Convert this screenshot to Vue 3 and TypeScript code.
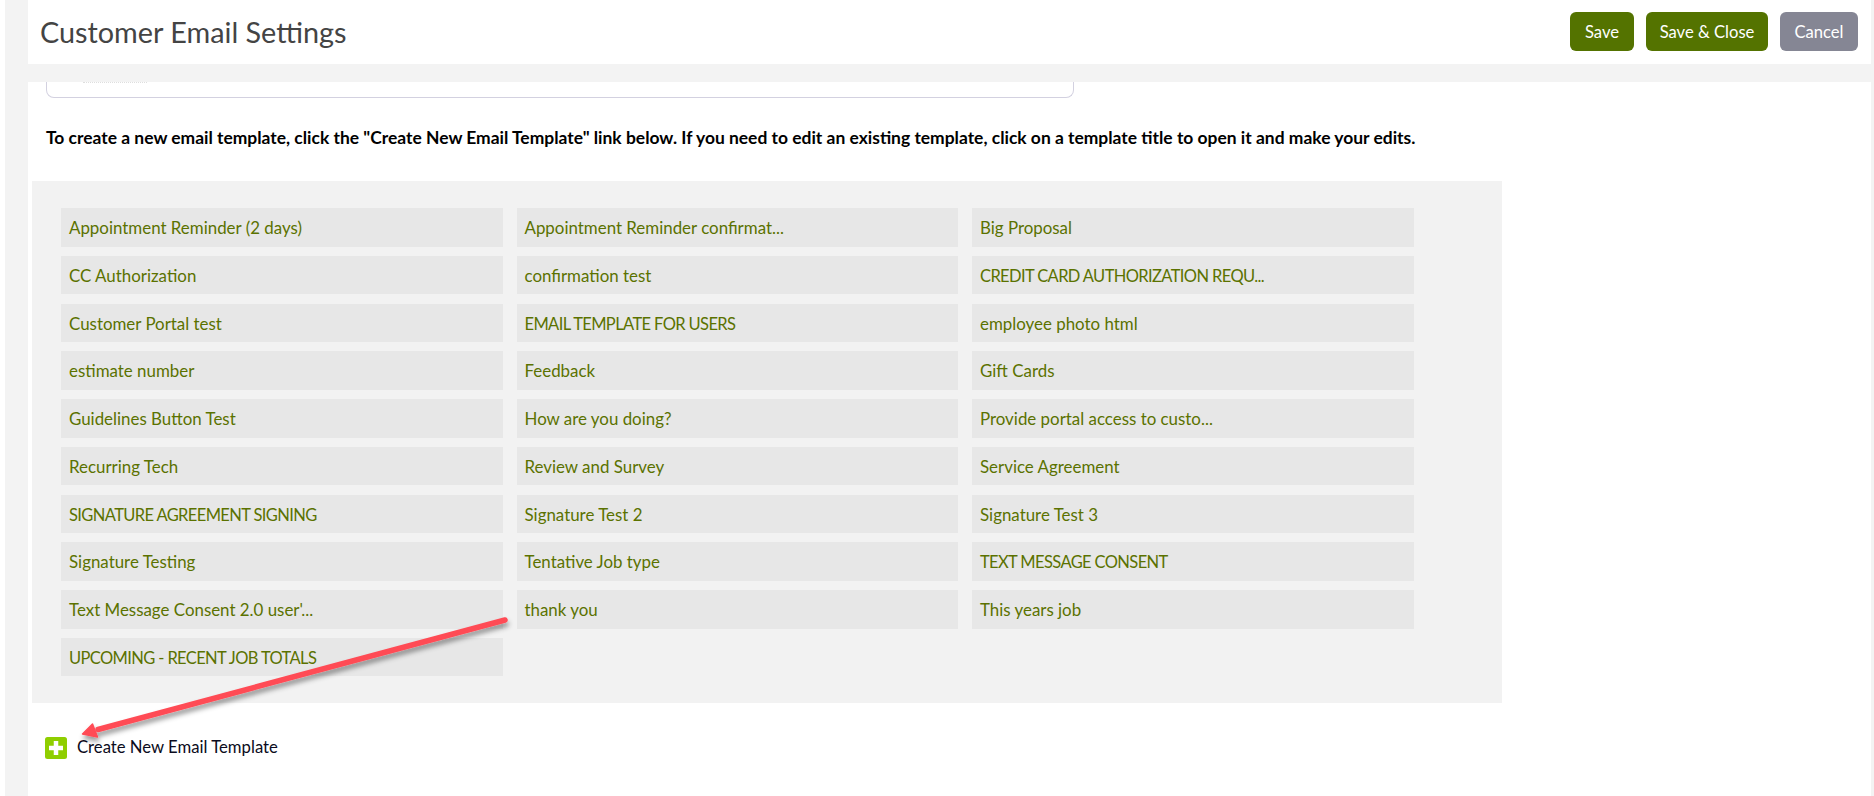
<script setup lang="ts">
const templates: string[] = [
  'Appointment Reminder (2 days)', 'Appointment Reminder confirmat...', 'Big Proposal',
  'CC Authorization', 'confirmation test', 'CREDIT CARD AUTHORIZATION REQU...',
  'Customer Portal test', 'EMAIL TEMPLATE FOR USERS', 'employee photo html',
  'estimate number', 'Feedback', 'Gift Cards',
  'Guidelines Button Test', 'How are you doing?', 'Provide portal access to custo...',
  'Recurring Tech', 'Review and Survey', 'Service Agreement',
  'SIGNATURE AGREEMENT SIGNING', 'Signature Test 2', 'Signature Test 3',
  'Signature Testing', 'Tentative Job type', 'TEXT MESSAGE CONSENT',
  "Text Message Consent 2.0 user'...", 'thank you', 'This years job',
  'UPCOMING - RECENT JOB TOTALS',
]
const isCaps = (t: string): boolean => t.length > 6 && t === t.toUpperCase()
</script>

<template>
  <div class="page">
    <div class="rail"></div>
    <main class="main">
      <header class="topbar">
        <h1 class="title">Customer Email Settings</h1>
        <div class="actions">
          <button class="btn save">Save</button>
          <button class="btn close">Save &amp; Close</button>
          <button class="btn cancel">Cancel</button>
        </div>
      </header>
      <section class="content">
        <div class="card"><span class="cut"></span></div>
        <p class="intro">To create a new email template, click the "Create New Email Template" link below. If you need to edit an existing template, click on a template title to open it and make your edits.</p>
        <div class="panel">
          <a v-for="t in templates" :key="t" class="chip" :class="{ caps: isCaps(t) }">{{ t }}</a>
        </div>
        <a class="create">
          <svg class="plus" viewBox="0 0 22 22" width="22" height="22">
            <rect width="22" height="22" rx="2.5" fill="#8fce00" />
            <path d="M11 4v14M4 11h14" stroke="#fff" stroke-width="4.5" fill="none" />
          </svg>
          <span class="create-label">Create New Email Template</span>
        </a>
      </section>
    </main>
    <svg class="arrow" viewBox="0 0 1874 796" width="1874" height="796">
      <defs>
        <filter id="sh" x="-10%" y="-30%" width="120%" height="170%">
          <feDropShadow dx="1" dy="4" stdDeviation="2.5" flood-color="#000" flood-opacity="0.4" />
        </filter>
      </defs>
      <g filter="url(#sh)">
        <path d="M505 620 L98 729.5" stroke="#ff4b55" stroke-width="5.5" stroke-linecap="round" fill="none" />
        <path d="M82.5 734 L92.5 724 L97.5 737 Z" fill="#ff4b55" stroke="#ff4b55" stroke-width="1.5" stroke-linejoin="round" />
      </g>
    </svg>
  </div>
</template>

<style scoped>
.page {
  position: relative;
  width: 1874px;
  height: 796px;
  overflow: hidden;
  display: flex;
  background: #fff;
  font-family: Lato, "Liberation Sans", sans-serif;
}
.rail {
  width: 23px;
  margin-left: 5px;
  background: #f3f3f3;
  flex: none;
}
.main {
  flex: 1;
  display: flex;
  flex-direction: column;
  min-width: 0;
  background: #f3f3f3;
  padding-right: 3px;
}
.topbar {
  height: 64px;
  background: #fff;
  display: flex;
  align-items: center;
  justify-content: space-between;
  padding: 0 13px 1px 12px;
  box-sizing: border-box;
  flex: none;
}
.title {
  margin: 0;
  font-size: 28.8px;
  font-weight: 400;
  color: #444;
}
.actions {
  display: flex;
  gap: 12px;
}
.btn {
  height: 39px;
  border: none;
  border-radius: 6px;
  color: #fff;
  font: inherit;
  font-size: 16.6px;
  padding: 0;
}
.save { width: 64px; background: #547300; }
.close { width: 122px; background: #547300; }
.cancel { width: 78px; background: #858694; }
.content {
  margin-top: 18px;
  flex: 1;
  background: #fff;
  overflow: hidden;
  padding-left: 4px;
}
.card {
  box-sizing: border-box;
  width: 1028px;
  margin-left: 14px;
  height: 16px;
  border: 1px solid #d3d1e0;
  border-top: none;
  border-radius: 0 0 8px 8px;
  padding-left: 36px;
}
.cut {
  display: block;
  width: 64px;
  border-top: 1px dotted #dedede;
}
.intro {
  margin: 28px 0 0 14px;
  font-size: 17.45px;
  line-height: 24px;
  font-weight: 700;
  color: #000;
  white-space: nowrap;
}
.panel {
  margin-top: 31px;
  width: 1470px;
  height: 522px;
  box-sizing: border-box;
  background: #f2f2f2;
  padding: 27px 0 0 29px;
  display: grid;
  grid-template-columns: repeat(3, 441.5px);
  grid-auto-rows: 38.6px;
  column-gap: 14px;
  row-gap: 9.18px;
}
.chip {
  background: #e7e7e7;
  color: #5b7200;
  font-size: 16.9px;
  line-height: 40px;
  padding-left: 8px;
  white-space: nowrap;
  overflow: hidden;
}
.caps {
  font-size: 16.5px;
  letter-spacing: -0.62px;
}
.create {
  margin: 34px 0 0 13px;
  display: flex;
  align-items: center;
  gap: 10px;
  font-size: 16.7px;
  color: #0b0b20;
}
.create-label {
  padding-bottom: 2px;
}
.plus { flex: none; }
.arrow {
  position: absolute;
  left: 0;
  top: 0;
  pointer-events: none;
}
</style>
